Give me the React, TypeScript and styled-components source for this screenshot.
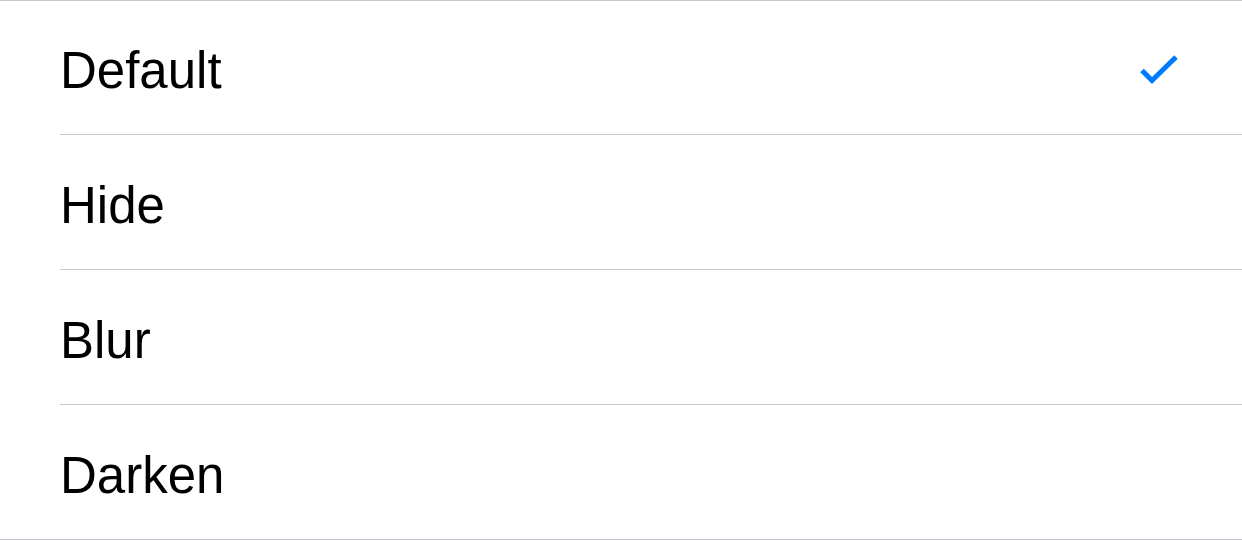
import styled, { createGlobalStyle } from 'styled-components';

const GlobalStyle = createGlobalStyle`
  body {
    margin: 0;
    background: #ffffff;
    font-family: "Liberation Sans", Arial, sans-serif;
  }
`;

const List = styled.div`
  display: flex;
  flex-direction: column;
  width: 100%;
  border-top: 1px solid #c8c7cc;
  background-color: #ffffff;
`;

const Row = styled.div<{ $last?: boolean }>`
  display: flex;
  padding-left: ${props => props.$last ? '0' : '60px'};
  border-bottom: ${props => props.$last ? '1px solid #c8c7cc' : 'none'};
`;

const Content = styled.div<{ $last?: boolean }>`
  flex: 1;
  display: flex;
  align-items: center;
  justify-content: space-between;
  box-sizing: border-box;
  height: ${props => props.$last ? '134px' : '135px'};
  padding: 6px 62px 0 ${props => props.$last ? '60px' : '0'};
  border-bottom: ${props => props.$last ? 'none' : '1px solid #c8c7cc'};

  ${Row}:first-child > & {
    height: 134px;
  }
`;

const Label = styled.span`
  font-size: 51px;
  line-height: 1;
  color: #000000;
`;

const Check = styled.svg`
  display: block;
  flex-shrink: 0;
`;

const CheckIcon = () => (
  <Check width="44" height="34" viewBox="0 0 44 34">
    <polyline
      points="6,16.5 16,26.5 40,3"
      fill="none"
      stroke="#007aff"
      strokeWidth="5"
      strokeLinejoin="miter"
    />
  </Check>
);

const options = ['Default', 'Hide', 'Blur', 'Darken'];

export default function App() {
  const selected = 'Default';

  return (
    <>
      <GlobalStyle />
      <List>
        {options.map((name, i) => {
          const last = i === options.length - 1;
          return (
            <Row key={name} $last={last}>
              <Content $last={last}>
                <Label>{name}</Label>
                {name === selected ? <CheckIcon /> : null}
              </Content>
            </Row>
          );
        })}
      </List>
    </>
  );
}
